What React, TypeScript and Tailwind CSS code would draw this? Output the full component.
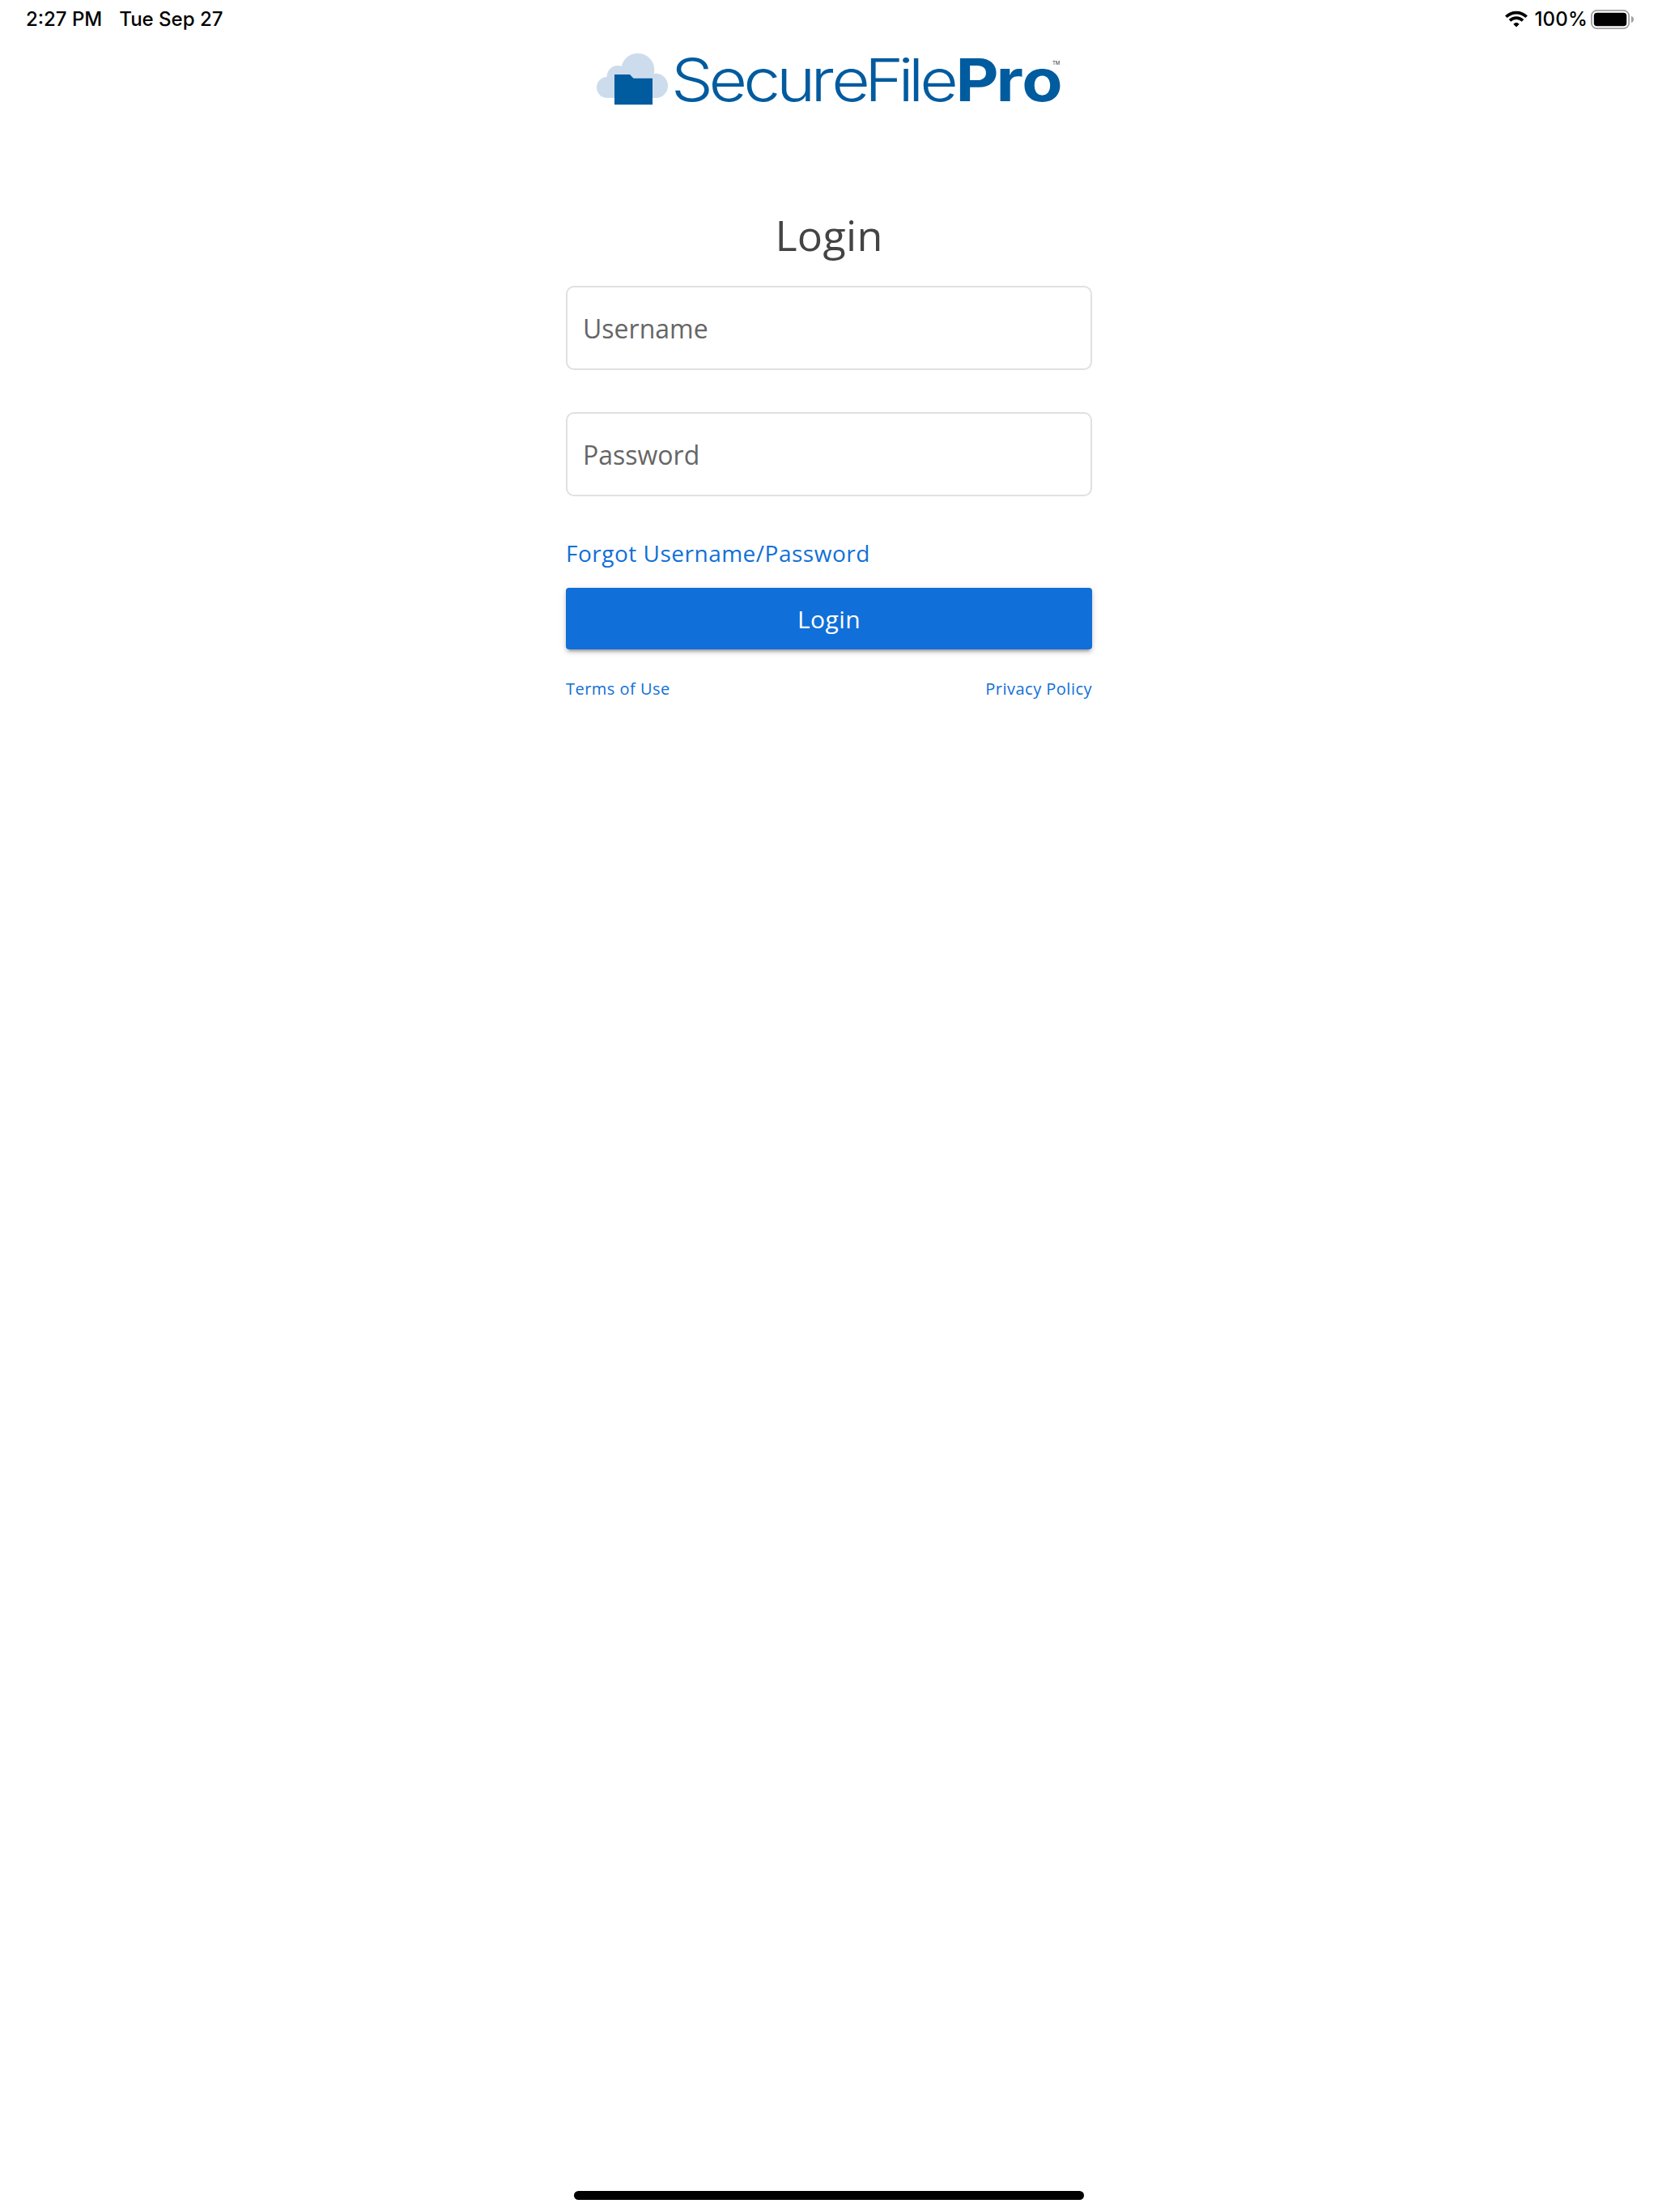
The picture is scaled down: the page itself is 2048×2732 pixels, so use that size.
import { useState } from "react";

function StatusBar() {
  return (
    <header className="flex h-[46px] items-start justify-between pl-8 pr-[29px] pt-[7px] font-[Inter,sans-serif] text-2xl leading-[34px] font-medium text-black">
      <div className="flex gap-[21px]">
        <span>2:27 PM</span>
        <span>Tue Sep 27</span>
      </div>
      <div className="flex items-start">
        <svg className="mt-[6px] mr-2 h-[22px] w-7" viewBox="0 0 28 22" fill="none" stroke="#000" strokeWidth="3.7">
          <path d="M1.4 7.8a17.8 17.8 0 0 1 25.2 0" />
          <path d="M6 12.4a11.3 11.3 0 0 1 16 0" />
          <path d="M14 20l-3.2-3.2a4.8 4.8 0 0 1 6.4 0z" fill="#000" strokeWidth="1" strokeLinejoin="round" />
        </svg>
        <span className="tracking-[0.2px]">100%</span>
        <svg className="mt-[5px] ml-1 h-6 w-[54px]" viewBox="0 0 54 24">
          <rect x="0.9" y="0.9" width="46.2" height="22.2" rx="6.6" fill="none" stroke="#a0a0a0" strokeWidth="1.8" />
          <rect x="3.8" y="3.8" width="40.4" height="16.4" rx="3.8" fill="#000" />
          <path d="M50 7.8c1.8.7 3 2.3 3 4.2s-1.2 3.5-3 4.2z" fill="#a0a0a0" />
        </svg>
      </div>
    </header>
  );
}

function Logo() {
  return (
    <svg
      className="mt-[14px] h-20 w-[576px] overflow-visible"
      viewBox="736 60 576 80"
      role="img"
      fontFamily="Inter, sans-serif"
    >
      <g fill="#cddcec">
        <circle cx="750" cy="108" r="13" />
        <circle cx="763" cy="94.5" r="13.4" />
        <circle cx="787.8" cy="86.3" r="20.5" />
        <circle cx="809.8" cy="105.9" r="15.2" />
        <rect x="750" y="95" width="60" height="26" />
      </g>
      <path d="M759 92h19l4.5 4.8H806v32.5h-47z" fill="#005b9f" />
      <g transform="scale(1.13 1)" fill="#005b9f" fontSize="72.7">
        <text
          x="733.6 774.8 812.6 848.6 886.2 909 945.1 981.9 992.9 1005.5"
          y="125.2"
          fontWeight="300"
        >
          SecureFile
        </text>
        <text x="1044.7 1089 1117.1" y="125.2" fontWeight="700">
          Pro
        </text>
      </g>
      <text x="1300" y="80" fontSize="6" fill="#333">
        TM
      </text>
    </svg>
  );
}

type FieldProps = {
  type: string;
  label: string;
  value: string;
  onChange: (value: string) => void;
};

function Field({ type, label, value, onChange }: FieldProps) {
  return (
    <input
      type={type}
      placeholder={label}
      value={value}
      onChange={(e) => onChange(e.target.value)}
      className="block h-[104px] w-full rounded-[10px] border-2 border-[#e0e0e0] px-[19px] pt-px text-[32px] text-[#444] outline-none placeholder:text-[#666]"
    />
  );
}

export default function App() {
  const [username, setUsername] = useState("");
  const [password, setPassword] = useState("");

  return (
    <div className="flex h-screen flex-col bg-white font-['Open_Sans',sans-serif]">
      <StatusBar />

      <main className="flex flex-1 flex-col items-center">
        <Logo />

        <form className="mt-[114px] w-[650px]" onSubmit={(e) => e.preventDefault()}>
          <h1 className="text-center text-[52px] leading-[72px] tracking-[0.3px] text-[#444]">
            Login
          </h1>

          <div className="mt-[27px] flex flex-col gap-[52px]">
            <Field type="text" label="Username" value={username} onChange={setUsername} />
            <Field type="password" label="Password" value={password} onChange={setPassword} />
          </div>

          <a href="#" className="mt-[50px] block text-[28px] leading-10 tracking-[0.5px] text-[#106fd8]">
            Forgot Username/Password
          </a>

          <button
            type="submit"
            className="mt-[23px] block h-[76px] w-full rounded-[4px] bg-[#106fd8] text-[30px] tracking-[0.4px] text-white shadow-[0_6px_2px_-4px_rgba(0,0,0,0.2),0_4px_4px_0_rgba(0,0,0,0.14),0_2px_10px_0_rgba(0,0,0,0.12)]"
          >
            Login
          </button>

          <div className="mt-[35px] flex justify-between text-xl leading-7 tracking-[0.48px] text-[#106fd8]">
            <a href="#">Terms of Use</a>
            <a href="#">Privacy Policy</a>
          </div>
        </form>
      </main>

      <div className="mx-auto mb-[15px] h-[11px] w-[630px] rounded-full bg-black" />
    </div>
  );
}
